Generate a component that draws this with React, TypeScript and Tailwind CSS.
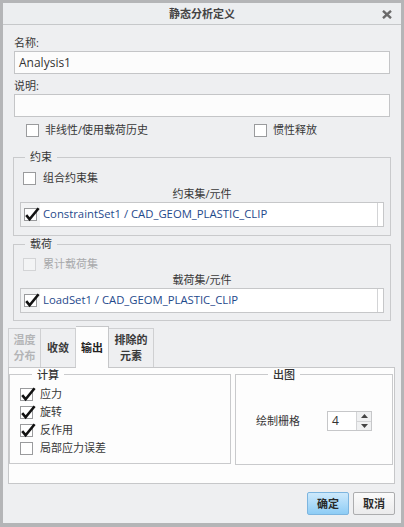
import React from "react";

function Check({ checked = false, disabled = false }: { checked?: boolean; disabled?: boolean }) {
  return (
    <span
      className={
        "relative inline-block w-[13px] h-[13px] shrink-0 border " +
        (disabled ? "border-[#d3d4d6] bg-[#f3f4f5]" : "border-[#9a9b9d] bg-white")
      }
    >
      {checked && (
        <svg
          className="absolute left-[-1px] top-[-2px] overflow-visible"
          width="16"
          height="16"
          viewBox="0 0 16 16"
        >
          <path d="M2.2 8.2 L5.6 12.2 L14.6 1.2" fill="none" stroke="#111" strokeWidth="2.6" strokeLinejoin="miter" />
        </svg>
      )}
    </span>
  );
}

function ListBox({ text }: { text: string }) {
  return (
    <div className="flex h-[25px] border border-[#c6c7c9] bg-[#f2f3f4]">
      <div className="w-[19px] flex items-center justify-center">
        <Check checked />
      </div>
      <div className="flex-1 bg-white flex items-center pl-[3px] text-[11.3px] text-[#1f4a8c] border-r border-[#d3d4d6]">
        {text}
      </div>
      <div className="w-[5px] bg-white" />
    </div>
  );
}

export default function App() {
  return (
    <div className="w-[404px] h-[527px] border-[3px] border-b-[4px] border-[#b4b5b7] bg-[#eeeff1] flex flex-col text-[11px] text-[#383838] font-['Open_Sans','Noto_Sans_CJK_SC',sans-serif] overflow-hidden">
      {/* Title bar */}
      <div className="relative h-[22px] shrink-0 bg-[#eceef0] border-b border-[#c6c8ca] flex items-center justify-center">
        <span className="font-bold text-[#444] leading-[16px]">静态分析定义</span>
        <svg className="absolute right-[9px] top-[7px]" width="10" height="9" viewBox="0 0 10 9">
          <path d="M1 0.8 L9 8.2 M9 0.8 L1 8.2" stroke="#6a6a6a" strokeWidth="2.4" />
        </svg>
      </div>

      {/* Upper section */}
      <div className="px-[10px] pt-[10px] flex flex-col">
        <div className="ml-[1px] leading-[16px]">名称:</div>
        <div className="mx-[1px] h-[23px] border border-[#c4c5c7] bg-[#fcfcfc] flex items-center pl-[4px] text-[12px] text-[#333]">
          Analysis1
        </div>
        <div className="ml-[1px] mt-[4px] leading-[16px]">说明:</div>
        <div className="mx-[1px] h-[23px] border border-[#c4c5c7] bg-[#fcfcfc]" />
        <div className="mt-[5px] h-[16px] pl-[13px] flex items-center">
          <div className="w-[228px] flex items-center gap-[6px]">
            <Check />
            <span className="leading-[16px]">非线性/使用载荷历史</span>
          </div>
          <div className="flex items-center gap-[6px]">
            <Check />
            <span className="leading-[16px]">惯性释放</span>
          </div>
        </div>

        <fieldset className="mt-[11px] border border-[#c9cacc] px-[6px] pb-[8px]">
          <legend className="ml-[5px] px-[5px] leading-[16px]">约束</legend>
          <div className="mt-[5px] h-[16px] pl-[3px] flex items-center gap-[7px]">
            <Check />
            <span className="leading-[16px]">组合约束集</span>
          </div>
          <div className="h-[16px] leading-[16px] text-center">约束集/元件</div>
          <ListBox text="ConstraintSet1 / CAD_GEOM_PLASTIC_CLIP" />
        </fieldset>

        <fieldset className="border border-[#c9cacc] px-[6px] pb-[7px]">
          <legend className="ml-[5px] px-[5px] leading-[16px]">载荷</legend>
          <div className="mt-[4px] h-[16px] pl-[3px] flex items-center gap-[7px]">
            <Check disabled />
            <span className="leading-[16px] text-[#a8a9ab]">累计载荷集</span>
          </div>
          <div className="h-[16px] leading-[16px] text-center">载荷集/元件</div>
          <ListBox text="LoadSet1 / CAD_GEOM_PLASTIC_CLIP" />
        </fieldset>
      </div>

      {/* Tabs section */}
      <div className="pl-[5px] pr-[6px] mt-[5px] flex flex-col">
        <div className="flex items-end h-[41px]">
          <div className="w-[33px] h-[39px] border border-b-0 border-[#cfd0d2] bg-[#eeeff1] flex items-center justify-center text-center leading-[16px] font-semibold text-[#b4b5b7]">
            温度<br />分布
          </div>
          <div className="w-[35px] h-[39px] border border-l-0 border-b-0 border-[#cfd0d2] bg-[#eeeff1] flex items-center justify-center leading-[16px] font-semibold text-[#3a3a3a]">
            收敛
          </div>
          <div className="relative z-10 w-[33px] h-[42px] -mb-[1px] border border-l-0 border-b-0 border-[#c6c7c9] bg-[#fdfdfd] flex items-center justify-center leading-[16px] font-semibold text-[#222]">
            输出
          </div>
          <div className="w-[45px] h-[39px] border border-l-0 border-b-0 border-[#cfd0d2] bg-[#eeeff1] flex items-center justify-center text-center leading-[16px] font-semibold text-[#3a3a3a]">
            排除的<br />元素
          </div>
        </div>
        <div className="h-[117px] border border-[#c6c7c9] bg-[#fdfdfd] flex gap-[4px] pr-[1px] items-start">
          <fieldset className="w-[222px] border border-[#c9cacc] pl-[10px] pb-[6px]">
            <legend className="ml-[12px] px-[5px] leading-[13px] font-medium text-[#333]">计算</legend>
            <div className="mt-[4px] flex flex-col">
              {[
                ["应力", true],
                ["旋转", true],
                ["反作用", true],
                ["局部应力误差", false],
              ].map(([label, c]) => (
                <div key={label as string} className="h-[18px] flex items-center gap-[7px]">
                  <Check checked={c as boolean} />
                  <span className="leading-[16px]">{label as string}</span>
                </div>
              ))}
            </div>
          </fieldset>
          <fieldset className="flex-1 self-stretch h-[97px] border border-[#c9cacc] pl-[20px]">
            <legend className="ml-[12px] px-[5px] leading-[13px] font-medium text-[#333]">出图</legend>
            <div className="mt-[30px] flex items-center">
              <span className="w-[71px] leading-[16px]">绘制栅格</span>
              <div className="h-[20px] w-[45px] border border-[#c6c7c9] bg-white flex">
                <div className="flex-1 flex items-center pl-[4px] text-[12px] text-[#333]">4</div>
                <div className="w-[15px] flex flex-col border-l border-[#d3d4d6]">
                  <div className="flex-1 bg-[#f0f1f2] border-b border-[#d3d4d6] flex items-center justify-center">
                    <svg width="7" height="4" viewBox="0 0 7 4">
                      <path d="M0 4 L3.5 0 L7 4 Z" fill="#444" />
                    </svg>
                  </div>
                  <div className="flex-1 bg-[#f0f1f2] flex items-center justify-center">
                    <svg width="7" height="4" viewBox="0 0 7 4">
                      <path d="M0 0 L7 0 L3.5 4 Z" fill="#444" />
                    </svg>
                  </div>
                </div>
              </div>
            </div>
          </fieldset>
        </div>

        <div className="mt-[8px] flex justify-end gap-[4px]">
          <button className="w-[42px] h-[23px] rounded-[2px] border border-[#7db5df] bg-gradient-to-b from-[#cde9fc] to-[#8dccf5] font-bold text-[#2a2a2a] leading-[16px]">
            确定
          </button>
          <button className="w-[42px] h-[23px] rounded-[2px] border border-[#acadaf] bg-gradient-to-b from-[#fbfbfb] to-[#ebebec] font-bold text-[#2a2a2a] leading-[16px]">
            取消
          </button>
        </div>
      </div>
    </div>
  );
}
